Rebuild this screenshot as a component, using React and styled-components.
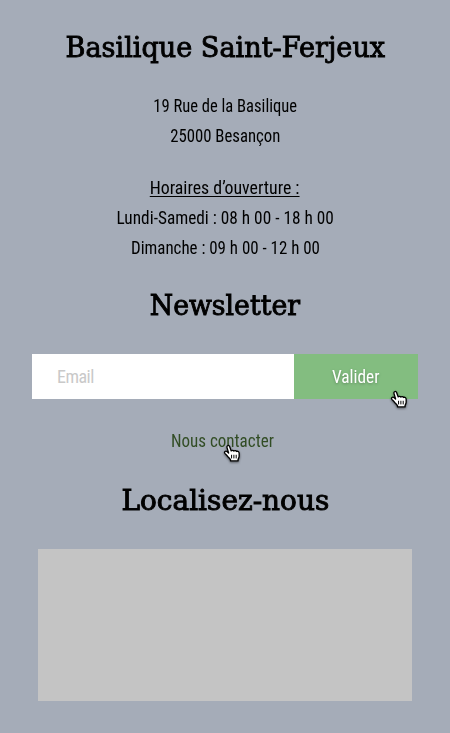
import React from 'react';
import styled, { createGlobalStyle } from 'styled-components';

const GlobalStyle = createGlobalStyle`
  *, *::before, *::after { box-sizing: border-box; }
  body { margin: 0; background: #a5acb8; }
`;

const Page = styled.main`
  display: flex;
  flex-direction: column;
  align-items: center;
  width: 450px;
  height: 733px;
  padding-top: 30px;
  overflow: hidden;
  color: #000;
  background: #a5acb8;
  font: 430 18px/30px Roboto, "Liberation Sans", sans-serif;
  font-stretch: 75%;
`;

const Heading = styled.h2`
  margin: 0;
  height: 36px;
  font: 400 27px/36px "DejaVu Serif", serif;
  font-stretch: normal;
  white-space: nowrap;
  -webkit-text-stroke: 0.9px currentColor;
  transform: scaleX(${p => p.$fit || 1});
`;

const Lines = styled.div`
  display: flex;
  flex-direction: column;
  align-items: center;
  margin-top: ${p => p.$gap}px;
`;

const Text = styled.span`
  display: block;
  white-space: nowrap;
  transform: scaleX(${p => p.$fit || 1});
`;

const Label = styled(Text)`
  text-decoration: underline;
  text-decoration-thickness: 1px;
  text-underline-offset: 2px;
  text-decoration-skip-ink: none;
`;

const Form = styled.form`
  display: flex;
  width: 386px;
  height: 45px;
  margin: 30px 0 27px;
`;

const Field = styled.input`
  width: 262px;
  height: 45px;
  padding: 0 0 0 25px;
  border: 0;
  border-radius: 0;
  outline: 0;
  background: #fff;
  font: inherit;
  font-stretch: 75%;
  letter-spacing: -0.5px;
  &::placeholder { color: #c9c9c9; opacity: 1; }
`;

const Submit = styled.button`
  position: relative;
  display: flex;
  align-items: center;
  justify-content: center;
  width: 124px;
  height: 45px;
  padding: 0;
  border: 0;
  color: #fff;
  background: #83bd80;
  font: inherit;
  font-stretch: 75%;
  text-shadow: 0 1px 3px rgba(0, 0, 0, 0.28);
`;

const Contact = styled.a`
  position: relative;
  margin-right: 5px;
  color: #324d25;
`;

const Pointer = styled.svg`
  position: absolute;
  left: ${p => p.$x}px;
  top: ${p => p.$y}px;
  width: 22px;
  height: 22px;
  overflow: visible;
  filter: drop-shadow(0 1px 1px rgba(0, 0, 0, 0.5));
`;

const MapArea = styled.div`
  width: 374px;
  height: 152px;
  margin-top: 30px;
  background: #c4c4c4;
`;

const Hand = ({ x, y }) => (
  <Pointer $x={x} $y={y} viewBox="0 0 20 20" aria-hidden="true">
    <path
      d="M4.7 11.6 2.6 9.4C1.6 8.2 3.2 6.8 4.5 7.8L6 9.1 4.5 4C4 2.2 6.3 1.5 6.9 3.2L8.4 7.2C9 6.4 10.2 6.6 10.8 7.3 11.5 6.7 12.7 6.9 13.2 7.7 14.4 7.2 15.5 7.9 15.6 9.3V12.1C15.6 13.4 14.8 14.1 14.6 15.2V16.3H7.7V15.3C7.3 14.1 5.6 12.9 4.7 11.6Z"
      fill="#fff" stroke="#000" strokeWidth="1.2" strokeLinejoin="round"
    />
    <path d="M8.7 10.7V14M10.8 10.7V14M12.9 10.7V14" fill="none" stroke="#000" strokeWidth="0.9" />
  </Pointer>
);

export default function App() {
  return (
    <>
      <GlobalStyle />
      <Page>
        <Heading $fit={1.003}>Basilique Saint-Ferjeux</Heading>
        <Lines $gap={25}>
          <Text $fit={0.92}>19 Rue de la Basilique</Text>
          <Text $fit={0.93}>25000 Besançon</Text>
        </Lines>
        <Lines $gap={22}>
          <Label $fit={0.99}>Horaires d’ouverture :</Label>
          <Text $fit={0.96}>Lundi-Samedi : 08 h 00 - 18 h 00</Text>
          <Text $fit={0.94}>Dimanche : 09 h 00 - 12 h 00</Text>
        </Lines>
        <Lines $gap={25}>
          <Heading $fit={0.99}>Newsletter</Heading>
        </Lines>
        <Form onSubmit={e => e.preventDefault()}>
          <Field type="email" placeholder="Email" aria-label="Email" />
          <Submit type="submit">
            <Text $fit={0.96}>Valider</Text>
            <Hand x={95} y={35} />
          </Submit>
        </Form>
        <Contact>
          <Text $fit={0.945}>Nous contacter</Text>
          <Hand x={54} y={17} />
        </Contact>
        <Lines $gap={27}>
          <Heading $fit={1.035}>Localisez-nous</Heading>
        </Lines>
        <MapArea />
      </Page>
    </>
  );
}
